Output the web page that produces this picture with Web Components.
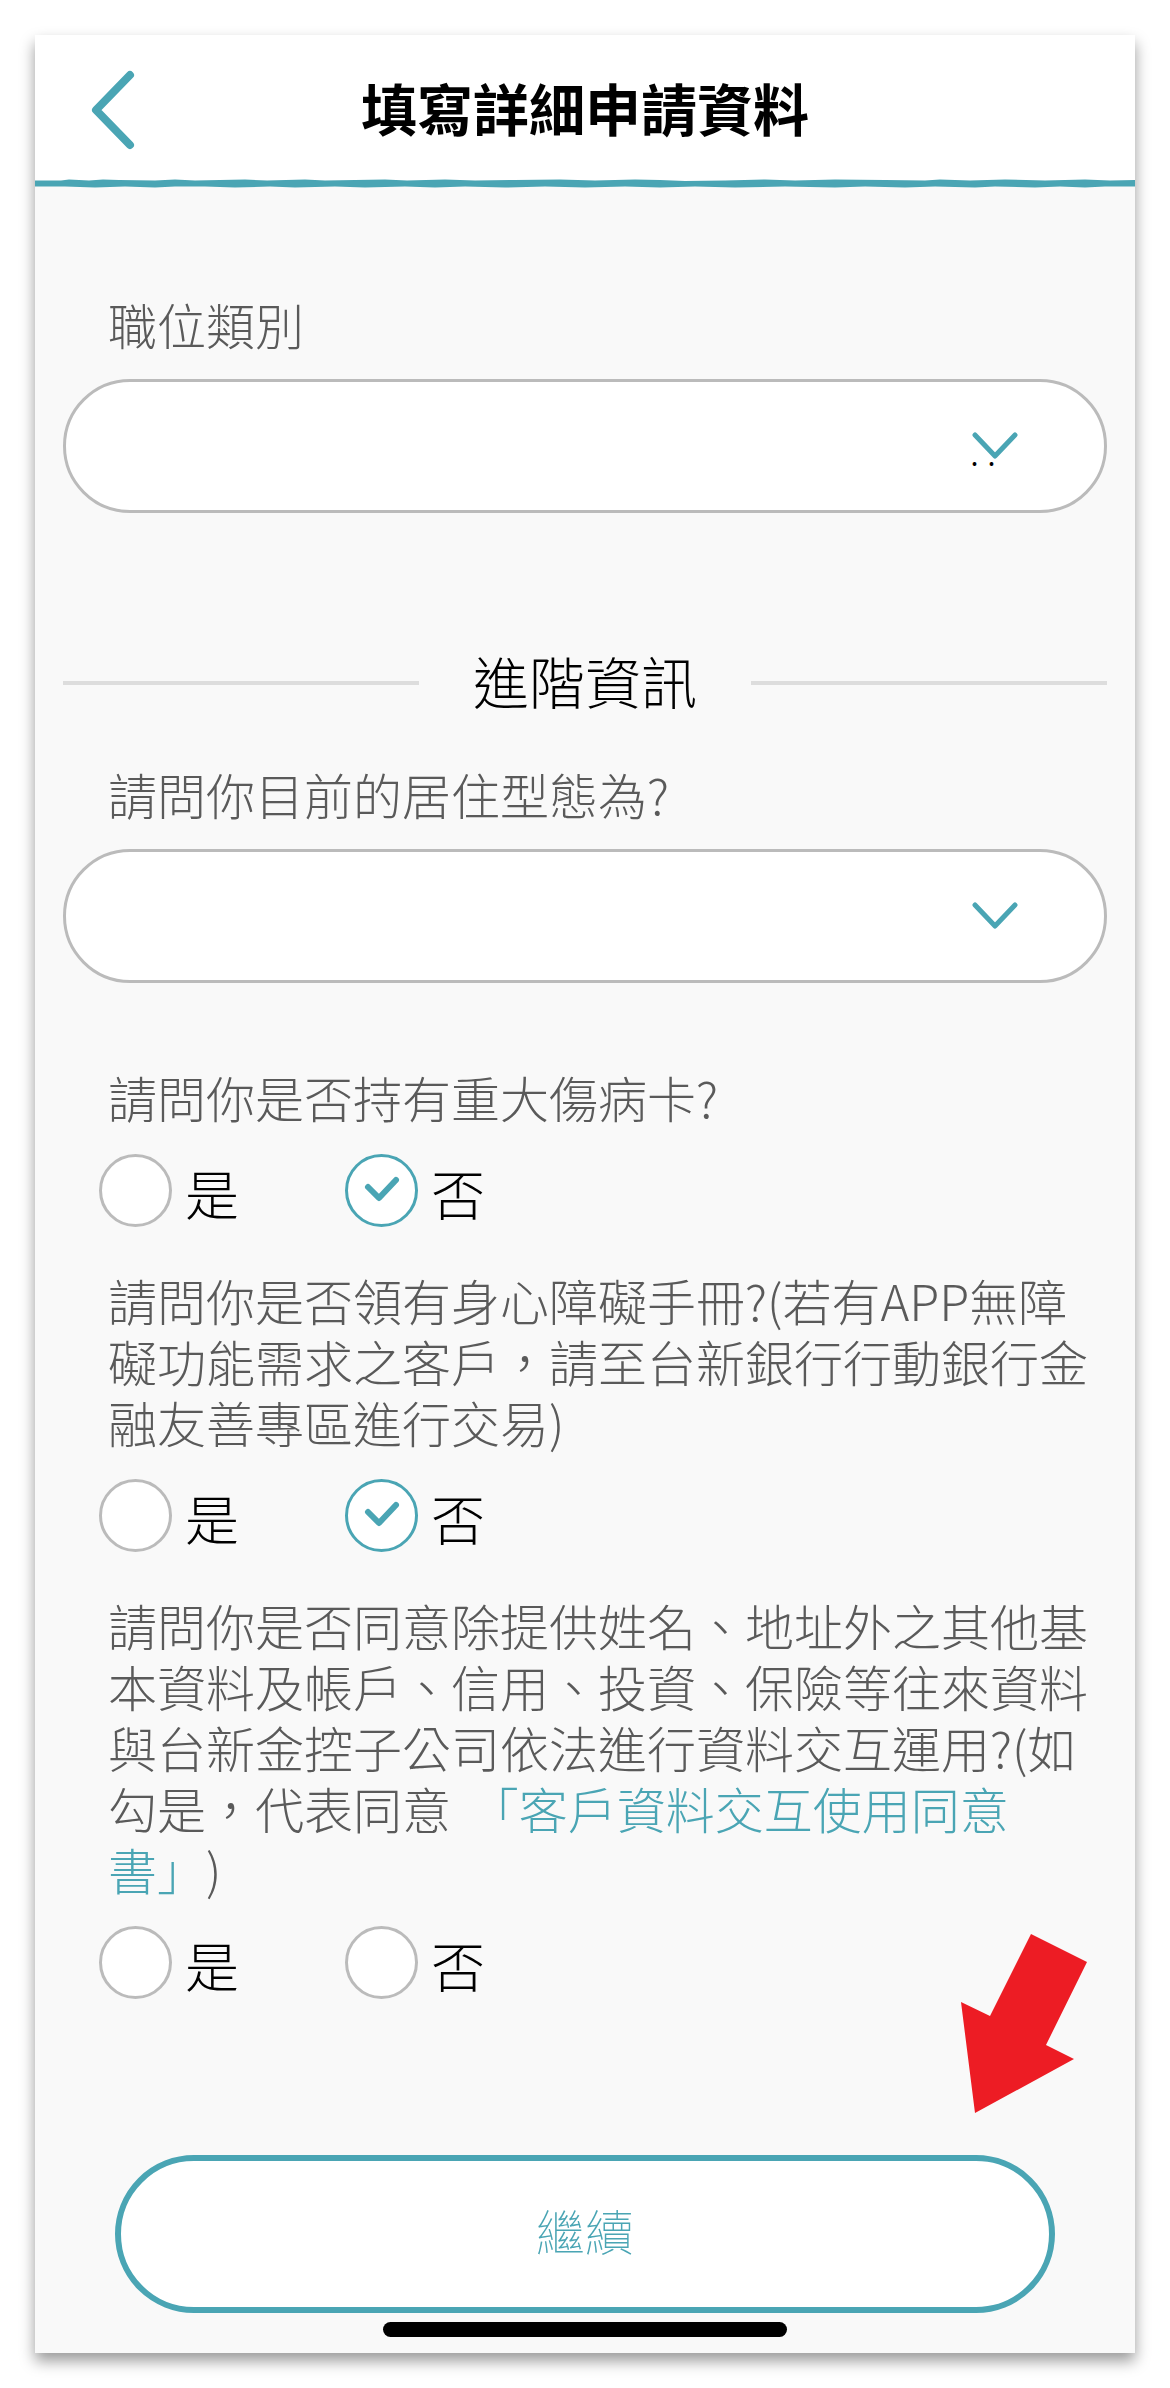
<!DOCTYPE html>
<html lang="zh-Hant">
<head>
<meta charset="utf-8">
<meta name="viewport" content="width=device-width, initial-scale=1">
<title>填寫詳細申請資料</title>
<style>
  body {
    margin: 0;
    padding: 35px;
    background: #fff;
    font-family: "Noto Sans CJK TC", sans-serif;
    font-weight: 300;
    text-spacing-trim: space-all;
    --accent: #4aa5b4;
    --line: #bbb;
    --muted: #5a5a5a;
  }
  a { color: var(--accent); text-decoration: none; margin-left: 8px; }
</style>
</head>
<body>
<app-screen>
  <app-header slot="header">填寫詳細申請資料</app-header>
  <select-field value=". .">職位類別</select-field>
  <section-title>進階資訊</section-title>
  <select-field>請問你目前的居住型態為?</select-field>
  <yes-no-field name="illness" value="no">請問你是否持有重大傷病卡?</yes-no-field>
  <yes-no-field name="disability" value="no">請問你是否領有身心障礙手冊?(若有APP無障礙功能需求之客戶，請至台新銀行行動銀行金融友善專區進行交易)</yes-no-field>
  <yes-no-field name="consent">請問你是否同意除提供姓名、地址外之其他基本資料及帳戶、信用、投資、保險等往來資料與台新金控子公司依法進行資料交互運用?(如勾是，代表同意 <a href="#consent">「客戶資料交互使用同意書」</a>)</yes-no-field>
  <submit-bar slot="footer">繼續</submit-bar>
</app-screen>

<script>
class AppScreen extends HTMLElement {
  constructor() {
    super()
    this.attachShadow({mode: 'open'})
  }

  connectedCallback() {
    this.shadowRoot.innerHTML = `
      <style>
        :host {
          display: block;
          background: #f9f9f9;
          box-shadow: 0 8px 14px rgba(0, 0, 0, .4);
        }
        main { padding: 105px 28px 0; }
        .home {
          width: 43%;
          height: 15px;
          margin: 9px auto 0;
          border-radius: 8px;
          background: #000;
        }
        footer { padding: 156px 80px 16px; }
      </style>
      <slot name="header"></slot>
      <main><slot></slot></main>
      <footer>
        <slot name="footer"></slot>
        <div class="home"></div>
      </footer>
    `
  }
}

class AppHeader extends HTMLElement {
  constructor() {
    super()
    this.attachShadow({mode: 'open'})
  }

  connectedCallback() {
    this.shadowRoot.innerHTML = `
      <style>
        :host { display: block; background: #fff; }
        header {
          display: grid;
          grid-template-columns: 100px 1fr 100px;
          align-items: center;
          box-sizing: border-box;
          height: 144px;
          padding: 6px 28px 0;
        }
        button {
          justify-self: center;
          padding: 0;
          border: 0;
          background: none;
          font-size: 0;
          cursor: pointer;
        }
        h1 {
          margin: 0;
          padding-bottom: 6px;
          font-size: 56px;
          line-height: 80px;
          font-weight: 700;
          text-align: center;
          color: #000;
        }
        svg { display: block; fill: none; stroke: var(--accent); }
        .wave { width: 100%; height: 9px; background: linear-gradient(#fff 50%, #f9f9f9 50%); }
      </style>
      <header>
        <button type="button" aria-label="返回">
          <svg width="44" height="80" viewBox="0 0 44 80" stroke-width="8" stroke-linecap="round" stroke-linejoin="round">
            <path d="M39 5 5 40l34 35"/>
          </svg>
        </button>
        <h1><slot></slot></h1>
      </header>
      <svg class="wave" viewBox="0 0 1100 9" preserveAspectRatio="none">
        <path fill="var(--accent)" stroke="none" d="M0 1.500 26 1.500 34 .5 54 1.500 68 .5 84 1 120 1.500 140 .5 160 1.500 185 1 210 .5 232 1.500 270 .5 290 1.500 320 1 350 .5 372 1.500 410 .5 440 1.500 480 1 525 .5 560 1.500 600 .5 625 1 650 2 690 1.500 730 .5 760 1.500 800 .5 850 1 890 1.500 905 .5 935 1.500 970 .5 1010 1.500 1050 .5 1075 1.500 1100 1
          V7.500L1070 7.500 1050 8.500 1025 7.500 1000 8.500 960 7.500 940 8.500 900 7.500 870 8.500 830 7.500 800 8.500 750 7.500 700 8.500 660 7.500 625 8.500 590 7.500 550 8.500 510 7.500 470 8.500 430 7.500 400 8.500 370 7.500 330 8.500 300 7.500 260 8.500 235 7.500 200 8.500 170 7.500 140 7.500 120 8.500 90 7.500 60 8.500 30 7.500H0z"/>
      </svg>
    `
  }
}

class SelectField extends HTMLElement {
  constructor() {
    super()
    this.attachShadow({mode: 'open'})
  }

  connectedCallback() {
    this.shadowRoot.innerHTML = `
      <style>
        :host { display: block; }
        label {
          display: block;
          padding-left: 45px;
          margin-bottom: 25px;
          font-size: 49px;
          line-height: 61px;
          color: var(--muted);
        }
        .box { display: grid; align-items: center; }
        .box > * { grid-area: 1 / 1; }
        select {
          appearance: none;
          width: 100%;
          height: 134px;
          padding: 8px 108px 0 45px;
          border: 3px solid var(--line);
          border-radius: 67px;
          background: #fff;
          color: #000;
          font: inherit;
          font-size: 36px;
          text-align-last: right;
        }
        svg {
          justify-self: end;
          margin-right: 88px;
          fill: none;
          stroke: var(--accent);
          pointer-events: none;
        }
      </style>
      <label for="field"><slot></slot></label>
      <div class="box">
        <select id="field"><option>${this.getAttribute('value') || ''}</option></select>
        <svg width="48" height="28" viewBox="0 0 48 28" stroke-width="5" stroke-linecap="round" stroke-linejoin="round">
          <path d="M4 3 24 24 44 3"/>
        </svg>
      </div>
    `
  }
}

class SectionTitle extends HTMLElement {
  constructor() {
    super()
    this.attachShadow({mode: 'open'})
  }

  connectedCallback() {
    this.shadowRoot.innerHTML = `
      <style>
        :host {
          display: flex;
          align-items: center;
          gap: 54px;
          margin: 129px 0 39px;
        }
        :host::before, :host::after {
          content: '';
          flex: 1;
          height: 4px;
          background: #ddd;
        }
        h2 {
          margin: 0;
          padding-bottom: 6px;
          font-size: 56px;
          line-height: 76px;
          font-weight: 300;
          color: #000;
        }
      </style>
      <h2><slot></slot></h2>
    `
  }
}

class YesNoField extends HTMLElement {
  constructor() {
    super()
    this.attachShadow({mode: 'open'})
  }

  option(value, text) {
    const checked = this.getAttribute('value') === value ? 'checked' : ''
    return `
      <label>
        <span class="mark">
          <input type="radio" name="${this.getAttribute('name')}" value="${value}" ${checked}>
          <svg width="72" height="72" viewBox="0 0 72 72" stroke-width="6" stroke-linecap="round" stroke-linejoin="round">
            <path d="M23 33 34 44 51 26"/>
          </svg>
        </span>
        <span class="text">${text}</span>
      </label>
    `
  }

  connectedCallback() {
    this.shadowRoot.innerHTML = `
      <style>
        :host { display: block; margin-top: 42px; }
        :host([name="illness"]) { margin-top: 83px; }
        fieldset { min-width: 0; margin: 0; padding: 0; border: 0; }
        legend {
          padding: 0 0 0 45px;
          margin-bottom: 27px;
          font-size: 49px;
          line-height: 61px;
          color: var(--muted);
        }
        .options {
          display: grid;
          grid-template-columns: 246px 246px;
          padding-left: 36px;
        }
        label { display: flex; align-items: center; gap: 13px; }
        .mark { display: grid; }
        .mark > * { grid-area: 1 / 1; }
        input {
          appearance: none;
          width: 73px;
          height: 73px;
          margin: 0;
          border: 3px solid var(--line);
          border-radius: 50%;
          background: #fff;
        }
        input:checked { border-color: var(--accent); }
        svg { fill: none; stroke: var(--accent); visibility: hidden; pointer-events: none; }
        input:checked + svg { visibility: visible; }
        .text {
          padding-top: 4px;
          font-size: 54px;
          line-height: 66px;
          color: #000;
        }
      </style>
      <fieldset>
        <legend><slot></slot></legend>
        <div class="options">
          ${this.option('yes', '是')}
          ${this.option('no', '否')}
        </div>
      </fieldset>
    `
  }
}

class SubmitBar extends HTMLElement {
  constructor() {
    super()
    this.attachShadow({mode: 'open'})
  }

  connectedCallback() {
    this.shadowRoot.innerHTML = `
      <style>
        :host { display: block; position: relative; }
        button {
          display: block;
          width: 100%;
          height: 158px;
          padding: 0 0 10px;
          border: 6px solid var(--accent);
          border-radius: 79px;
          background: #fff;
          color: var(--accent);
          font: inherit;
          font-size: 49px;
          font-weight: 100;
          cursor: pointer;
        }
        /* pointer that hangs over the button's right end */
        svg {
          position: absolute;
          right: -32px;
          bottom: 100%;
          margin-bottom: 42px;
          fill: #ed1c24;
        }
      </style>
      <svg width="126" height="179" viewBox="0 0 126 179" aria-hidden="true">
        <path d="M70 0 126 28 85 111 113 125 14 179 0 68 29 82z"/>
      </svg>
      <button type="button"><slot></slot></button>
    `
  }
}

customElements.define('app-screen', AppScreen)
customElements.define('app-header', AppHeader)
customElements.define('select-field', SelectField)
customElements.define('section-title', SectionTitle)
customElements.define('yes-no-field', YesNoField)
customElements.define('submit-bar', SubmitBar)
</script>
</body>
</html>
